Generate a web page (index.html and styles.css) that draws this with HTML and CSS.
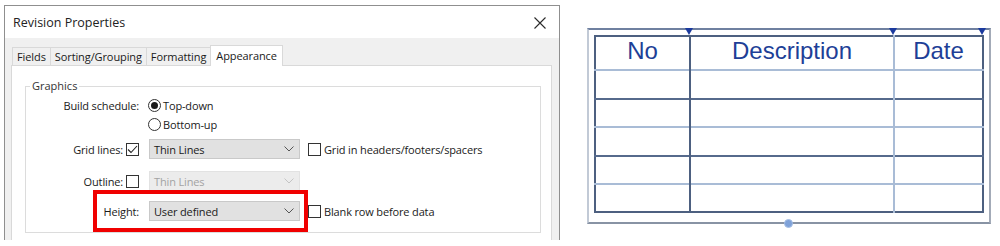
FILE: index.html
```html
<!doctype html>
<html lang="en">
  <head>
    <meta charset="UTF-8" />
    <meta name="viewport" content="width=device-width, initial-scale=1.0" />
    <title>Revision Properties</title>
    <link rel="stylesheet" href="styles.css">
  </head>
  <body>
    <div class="page">
      <div class="dialog">
        <div class="titlebar">
          <span class="title">Revision Properties</span>
          <svg class="close" width="12" height="12" viewBox="0 0 12 12">
            <path d="M0.5 0.5 L11.5 11.5 M11.5 0.5 L0.5 11.5" stroke="#2b2b2b" stroke-width="1.1" fill="none" />
          </svg>
        </div>
        <div class="dialog-body">
          <div class="tabs">
            <span class="tab">Fields</span>
            <span class="tab">Sorting/Grouping</span>
            <span class="tab">Formatting</span>
            <span class="tab active">Appearance</span>
          </div>
          <div class="panel">
            <fieldset class="group">
              <legend>Graphics</legend>

              <div class="row row-build">
                <span class="label">Build schedule:</span>
                <div class="radios">
                  <label class="radio-line"><span class="radio checked"></span>Top-down</label>
                  <label class="radio-line"><span class="radio"></span>Bottom-up</label>
                </div>
              </div>

              <div class="row row-grid">
                <span class="label">Grid lines:<span class="check">
                  <svg width="13" height="13" viewBox="0 0 13 13"><path d="M2 6.5 L5 9.5 L11 3" stroke="#222" stroke-width="1.1" fill="none" /></svg>
                </span></span>
                <div class="select">Thin Lines<svg class="chevron" width="10" height="6" viewBox="0 0 10 6"><path d="M0.5 0.5 L5 5 L9.5 0.5" stroke="#555" stroke-width="1" fill="none" /></svg></div>
                <label class="option"><span class="check"></span>Grid in headers/footers/spacers</label>
              </div>

              <div class="row row-outline">
                <span class="label">Outline:<span class="check"></span></span>
                <div class="select disabled">Thin Lines<svg class="chevron" width="10" height="6" viewBox="0 0 10 6"><path d="M0.5 0.5 L5 5 L9.5 0.5" stroke="#c4c4c4" stroke-width="1" fill="none" /></svg></div>
              </div>

              <div class="row row-height">
                <span class="label">Height:</span>
                <div class="select">User defined<svg class="chevron" width="10" height="6" viewBox="0 0 10 6"><path d="M0.5 0.5 L5 5 L9.5 0.5" stroke="#555" stroke-width="1" fill="none" /></svg></div>
                <label class="option"><span class="check"></span>Blank row before data</label>
              </div>

              <div class="highlight"></div>
            </fieldset>
          </div>
        </div>
      </div>

      <div class="sheet">
        <div class="frame">
          <table class="schedule">
            <tr class="head light">
              <th class="c1">No</th>
              <th class="c2">Description</th>
              <th class="c3">Date</th>
            </tr>
            <tr class="r29 dark"><td class="c1"></td><td class="c2"></td><td class="c3"></td></tr>
            <tr class="r28 light"><td class="c1"></td><td class="c2"></td><td class="c3"></td></tr>
            <tr class="r29 dark"><td class="c1"></td><td class="c2"></td><td class="c3"></td></tr>
            <tr class="r28 light"><td class="c1"></td><td class="c2"></td><td class="c3"></td></tr>
            <tr class="r28 last"><td class="c1"></td><td class="c2"></td><td class="c3"></td></tr>
          </table>
          <span class="marker m1"></span>
          <span class="marker m2"></span>
          <span class="marker m3"></span>
          <span class="grip"></span>
        </div>
      </div>
    </div>
  </body>
</html>
```

FILE: styles.css
```css
body {
  margin: 0;
  padding: 0;
  background-color: #fff;
  font-family: "Open Sans", "Noto Sans", sans-serif;
  color: #1a1a1a;
}

.page {
  display: flex;
  align-items: flex-start;
}

/* dialog */

.dialog {
  margin: 5px 0 0 4px;
  width: 556px;
  height: 235px;
  box-sizing: border-box;
  border: 1px solid #8f8f8f;
  border-bottom: none;
  display: flex;
  flex-direction: column;
  overflow: hidden;
}

.titlebar {
  height: 32px;
  flex: none;
  background-color: #fff;
  display: flex;
  align-items: center;
  justify-content: space-between;
  padding: 0 13px 0 8px;
}

.title {
  font-size: 12.5px;
  color: #222;
  margin-top: 1px;
}

.close {
  margin-top: 1px;
}

.dialog-body {
  flex: 1;
  background-color: #f0f0f0;
  padding-top: 7px;
  display: flex;
  flex-direction: column;
}

.tabs {
  display: flex;
  align-items: flex-end;
  padding-left: 7px;
  height: 20px;
  position: relative;
  z-index: 1;
}

.tab {
  height: 18px;
  box-sizing: border-box;
  border: 1px solid #d9d9d9;
  border-bottom: none;
  border-right: none;
  padding: 0 4px;
  font-size: 11px;
  letter-spacing: -0.1px;
  line-height: 17px;
  background-color: #f0f0f0;
}

.tab.active {
  height: 21px;
  margin-bottom: -1px;
  border-right: 1px solid #d9d9d9;
  background-color: #fff;
  padding: 1px 5px 0;
}

.panel {
  flex: 1;
  margin: 0 7px 0 6px;
  background-color: #fff;
  border: 1px solid #d9d9d9;
  border-bottom: none;
  padding: 13px 0 0 13px;
}

.group {
  position: relative;
  margin: 0;
  padding: 0;
  width: 516px;
  height: 154px;
  box-sizing: border-box;
  border: 1px solid #dcdcdc;
}

.group legend {
  margin-left: 4px;
  padding: 0 2px;
  font-size: 11px;
  line-height: 14px;
  color: #333;
}

.row {
  display: flex;
  align-items: center;
  font-size: 11px;
  letter-spacing: -0.15px;
}

.label {
  width: 113px;
  flex: none;
  display: flex;
  justify-content: flex-end;
  align-items: center;
  gap: 3px;
  margin-right: 9px;
  padding-right: 1px;
}

.row-build {
  margin-top: 3px;
  align-items: flex-start;
}

.row-build .label {
  height: 19px;
  padding-right: 0;
}

.radios {
  display: flex;
  flex-direction: column;
}

.radio-line {
  height: 19px;
  display: flex;
  align-items: center;
  gap: 2px;
}

.radio {
  width: 13px;
  height: 13px;
  box-sizing: border-box;
  border: 1px solid #333;
  border-radius: 50%;
  background-color: #fff;
  display: flex;
  align-items: center;
  justify-content: center;
}

.radio.checked::after {
  content: "";
  width: 7px;
  height: 7px;
  border-radius: 50%;
  background-color: #1a1a1a;
}

.check {
  width: 13px;
  height: 13px;
  box-sizing: border-box;
  border: 1px solid #333;
  background-color: #fff;
  display: inline-flex;
  flex: none;
}

.check svg {
  margin: -1px;
}

.select {
  width: 151px;
  height: 20px;
  box-sizing: border-box;
  flex: none;
  border: 1px solid #c9c9c9;
  background-color: #e1e1e1;
  padding: 0 4px;
  display: flex;
  align-items: center;
  justify-content: space-between;
}

.select.disabled {
  background-color: #ececec;
  border-color: #e2e2e2;
  color: #a3a3a3;
}

.chevron {
  margin-right: 1px;
}

.option {
  display: flex;
  align-items: center;
  gap: 3px;
  margin-left: 8px;
}

.row-grid {
  margin-top: 5px;
}

.row-outline {
  margin-top: 12px;
}

.row-height {
  margin-top: 10px;
}

.highlight {
  position: absolute;
  left: 67px;
  top: 97px;
  width: 215px;
  height: 42px;
  box-sizing: border-box;
  border: 4px solid #f00000;
}

/* schedule preview */

.sheet {
  margin-left: 27px;
  margin-top: 28px;
}

.frame {
  position: relative;
  width: 404px;
  height: 196px;
  box-sizing: border-box;
  border-top: 2px solid #6f80a0;
  border-left: 2px solid #c2cad6;
  border-right: 2px solid #a3abb8;
  border-bottom: 2px solid #8893a4;
  padding: 5px 0 0 5px;
}

.schedule {
  border-collapse: collapse;
  width: 390px;
  border: 2px solid #4d6080;
  font-family: "Liberation Sans", Arial, sans-serif;
}

.schedule th,
.schedule td {
  padding: 0;
}

.schedule th {
  font-size: 24px;
  font-weight: normal;
  color: #1e3f97;
  line-height: 24px;
  padding-bottom: 4px;
}

.schedule .c1 {
  width: 93px;
  border-right: 2px solid #4d6080;
}

.schedule .c2 {
  width: 202px;
  border-right: 2px solid #a9bcd6;
}

.head {
  height: 34px;
}

.r29 {
  height: 29px;
}

.r28 {
  height: 28px;
}

.light {
  border-bottom: 2px solid #a9bcd6;
}

.dark {
  border-bottom: 2px solid #566a8c;
}

.marker {
  position: absolute;
  top: -2px;
  width: 0;
  height: 0;
  border-left: 4px solid transparent;
  border-right: 4px solid transparent;
  border-top: 7px solid #1b3a9e;
}

.m1 {
  left: 96px;
}

.m2 {
  left: 300px;
}

.m3 {
  left: 389px;
}

.grip {
  position: absolute;
  left: 195px;
  top: 189px;
  width: 9px;
  height: 9px;
  box-sizing: border-box;
  border-radius: 50%;
  background-color: #7fa2d9;
  border: 1px solid #a6c0e6;
}
```
